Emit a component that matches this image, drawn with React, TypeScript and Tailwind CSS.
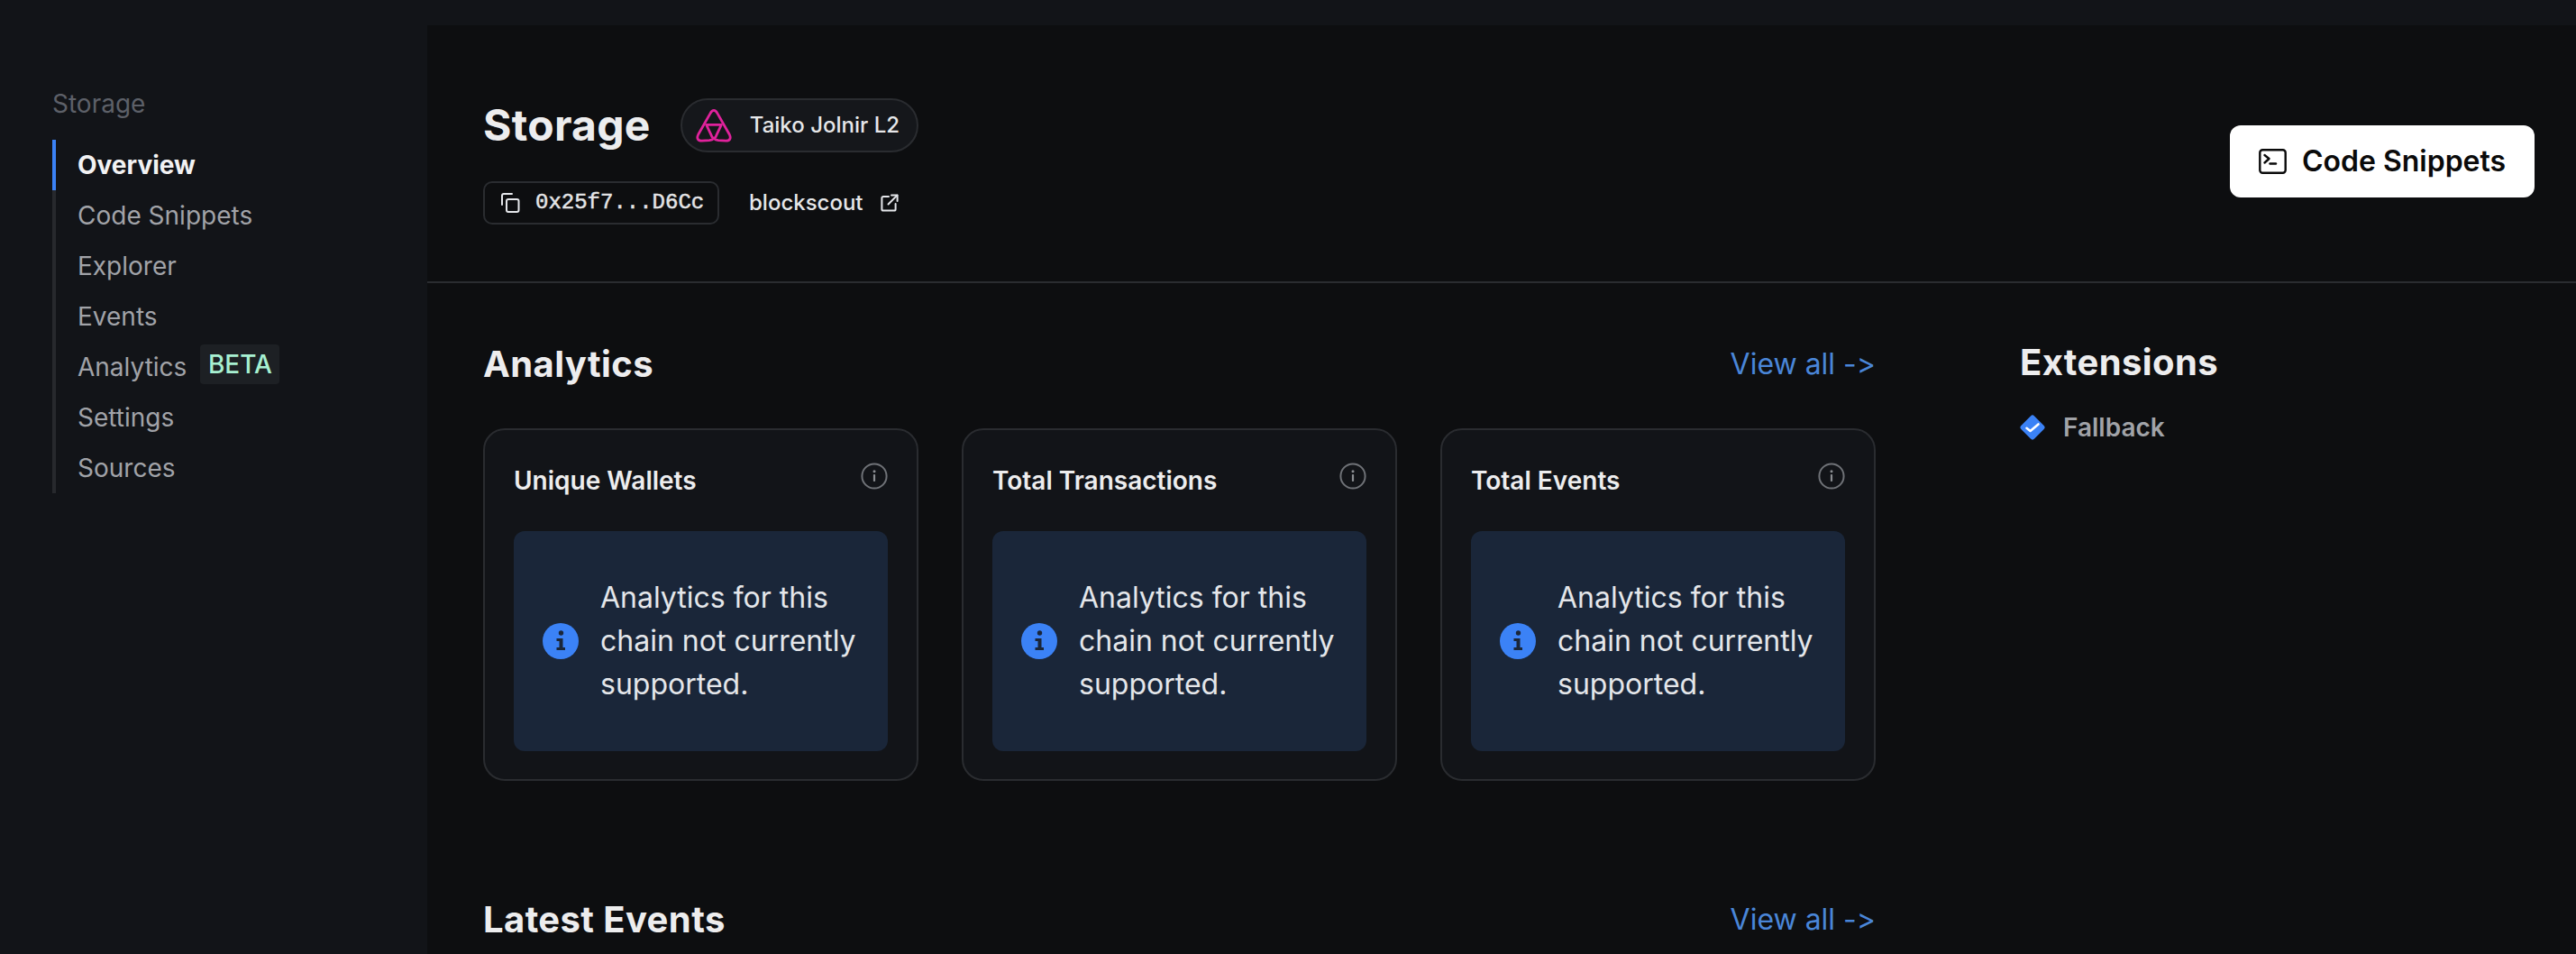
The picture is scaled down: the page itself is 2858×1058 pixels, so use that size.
import React from "react";

const TaikoLogo = () => (
  <svg width="40" height="38" viewBox="0 0 36 34" fill="none" stroke="#e0229c" strokeWidth="2.5" strokeLinejoin="round" strokeLinecap="round">
    <path d="M18 2 C16.5 2 15.5 3 14.5 5 L2.5 26 C0.5 30 2 32.5 6 32.5 L13.5 32 C15.5 31.8 17 31 18 30 C19 31 20.5 31.8 22.5 32 L30 32.5 C34 32.5 35.5 30 33.5 26 L21.5 5 C20.5 3 19.5 2 18 2 Z" />
    <path d="M10.5 16.5 L25.5 16.5 L20.5 27 C19.5 30.5 16.5 30.5 15.5 27 Z" />
  </svg>
);

const CopyIcon = () => (
  <svg width="22" height="22" viewBox="0 0 22 22" fill="none" stroke="#e5e7eb" strokeWidth="2" strokeLinejoin="round" strokeLinecap="round">
    <rect x="7" y="7" width="13.5" height="14" rx="2" />
    <path d="M2 13 V3 a2 2 0 0 1 2 -2 H13" />
  </svg>
);

const ExternalIcon = () => (
  <svg width="20" height="20" viewBox="0 0 20 20" fill="none" stroke="#e5e7eb" strokeWidth="2" strokeLinecap="round" strokeLinejoin="round">
    <path d="M9 3 H3 a1.6 1.6 0 0 0 -1.6 1.6 V17 a1.6 1.6 0 0 0 1.6 1.6 H15 a1.6 1.6 0 0 0 1.6 -1.6 V11" />
    <path d="M12 1.4 H18.6 V8" />
    <path d="M18.4 1.6 L8.5 11.5" />
  </svg>
);

const TerminalIcon = () => (
  <svg width="31" height="28" viewBox="0 0 31 28" fill="none" stroke="#0a0a0a" strokeWidth="2.4" strokeLinecap="round" strokeLinejoin="round">
    <rect x="1.3" y="1.3" width="28.4" height="25.4" rx="3" />
    <path d="M6.5 7 L11.5 11 L6.5 15.5" />
    <path d="M12.5 16.5 H19" />
  </svg>
);

const SmallInfo = () => (
  <svg width="30" height="30" viewBox="0 0 30 30" fill="none">
    <circle cx="15" cy="15" r="13.6" stroke="#6f7277" strokeWidth="2" />
    <circle cx="15" cy="9.8" r="1.5" fill="#8b8e92" />
    <rect x="13.9" y="13" width="2.2" height="8" rx="0.8" fill="#8b8e92" />
  </svg>
);

const BlueInfo = () => (
  <svg className="shrink-0" width="40" height="40" viewBox="0 0 40 40">
    <circle cx="20" cy="20" r="20" fill="#3b82f6" />
    <circle cx="20.5" cy="11" r="2.7" fill="#1a2639" />
    <path d="M15.5 17 H22.5 V27 H25 V30 H15.5 V27 H18.5 V20 H15.5 Z" fill="#1a2639" />
  </svg>
);

const FallbackIcon = () => (
  <svg width="28" height="28" viewBox="0 0 28 28">
    <path d="M11.9 1.4 a3 3 0 0 1 4.2 0 L26.6 11.9 a3 3 0 0 1 0 4.2 L16.1 26.6 a3 3 0 0 1 -4.2 0 L1.4 16.1 a3 3 0 0 1 0 -4.2 Z" fill="#3b82f6" />
    <path d="M7.5 14.8 L11.6 18 L20.5 10.5" fill="none" stroke="#ffffff" strokeWidth="2.6" strokeLinecap="round" strokeLinejoin="round" />
  </svg>
);

const navItems = ["Code Snippets", "Explorer", "Events", "Analytics", "Settings", "Sources"];

const SectionHead = ({ title }: { title: string }) => (
  <div className="flex items-center justify-between">
    <h2 className="text-[40px] leading-[48px] font-bold tracking-[0.4px] text-[#ededee]">{title}</h2>
    <a className="text-[32px] leading-[48px] text-[#4a86d8] [font-variant-ligatures:no-contextual]">View all -&gt;</a>
  </div>
);

const Card = ({ title }: { title: string }) => (
  <div className="flex-1 h-[391px] rounded-[24px] border-2 border-[#2a2c30] bg-[#121418] px-[32px] pt-[32px]">
    <div className="flex items-start justify-between h-[80px]">
      <div className="text-[28px] leading-[48px] font-semibold text-[#ededee]">{title}</div>
      <div className="mt-[4px]"><SmallInfo /></div>
    </div>
    <div className="h-[244px] rounded-[12px] bg-[#1a2639] flex items-center pl-[32px] pr-[24px] gap-[24px]">
      <BlueInfo />
      <p className="text-[32px] leading-[48px] text-[#e4e6ea]">Analytics for this chain not currently supported.</p>
    </div>
  </div>
);

export default function App() {
  return (
    <div className="h-[1058px] w-[2858px] overflow-hidden bg-[#121418] text-white flex flex-col font-['Inter',sans-serif]">
      <div className="h-[28px] shrink-0" />
      <div className="flex flex-1 min-h-0">
        <aside className="w-[474px] shrink-0 pl-[58px] pt-[67px]">
          <div className="text-[28px] leading-[40px] text-[#5d6068]">Storage</div>
          <nav className="mt-[20px] w-[300px] border-l-4 border-[#27292d]">
            <div className="h-[56px] -ml-[4px] border-l-4 border-[#3b82f6] pl-[24px] flex items-center text-[28px] font-bold text-[#f2f2f3]">Overview</div>
            {navItems.map((n) => (
              <div key={n} className="h-[56px] pl-[24px] flex items-center text-[28px] text-[#a1a3a8]">
                {n}
                {n === "Analytics" && (
                  <span className="ml-[15px] -mt-[6px] h-[44px] w-[88px] flex items-center justify-center rounded-[4px] bg-[#1d2024] text-[#a7f0d1] font-medium">BETA</span>
                )}
              </div>
            ))}
          </nav>
        </aside>
        <main className="flex-1 min-w-0 bg-[#0d0e10]">
          <header className="h-[286px] border-b-2 border-[#2a2c30] flex justify-between pl-[62px] pr-[46px]">
            <div className="pt-[81px]">
              <div className="flex items-center gap-[33px]">
                <h1 className="text-[48px] leading-[60px] font-bold tracking-[0.3px] text-[#ededee]">Storage</h1>
                <div className="h-[60px] w-[264px] flex items-center gap-[20px] rounded-full border-2 border-[#2a2c30] bg-[#15171b] pl-[15px]">
                  <TaikoLogo />
                  <span className="text-[24px] font-medium text-[#e6e7e9]">Taiko Jolnir L2</span>
                </div>
              </div>
              <div className="flex items-center mt-[32px]">
                <div className="h-[48px] w-[262px] flex items-center gap-[17px] rounded-[10px] border-2 border-[#2a2c30] pl-[17px]">
                  <CopyIcon />
                  <span className="font-['Liberation_Mono',monospace] text-[24px] [-webkit-text-stroke:0.5px_#e4e4e6] text-[#e4e4e6]">0x25f7...D6Cc</span>
                </div>
                <span className="ml-[33px] text-[24px] font-medium text-[#e6e7e9]">blockscout</span>
                <span className="ml-[19px]"><ExternalIcon /></span>
              </div>
            </div>
            <div className="pt-[111px]">
              <button className="h-[80px] w-[338px] rounded-[12px] bg-white flex items-center justify-center gap-[17px] text-[32px] font-semibold text-[#0a0a0a]">
                <TerminalIcon />
                Code Snippets
              </button>
            </div>
          </header>
          <div className="flex pl-[62px] pt-[66px]">
            <div className="w-[1545px] shrink-0">
              <SectionHead title="Analytics" />
              <div className="flex gap-[48px] mt-[47px]">
                <Card title="Unique Wallets" />
                <Card title="Total Transactions" />
                <Card title="Total Events" />
              </div>
              <div className="mt-[130px]">
                <SectionHead title="Latest Events" />
              </div>
            </div>
            <div className="ml-[160px]">
              <h2 className="text-[40px] leading-[48px] font-bold tracking-[0.4px] text-[#ededee] -mt-[2px]">Extensions</h2>
              <div className="flex items-center gap-[20px] mt-[27px]">
                <FallbackIcon />
                <span className="text-[28px] font-semibold text-[#a1a3a8]">Fallback</span>
              </div>
            </div>
          </div>
        </main>
      </div>
    </div>
  );
}
